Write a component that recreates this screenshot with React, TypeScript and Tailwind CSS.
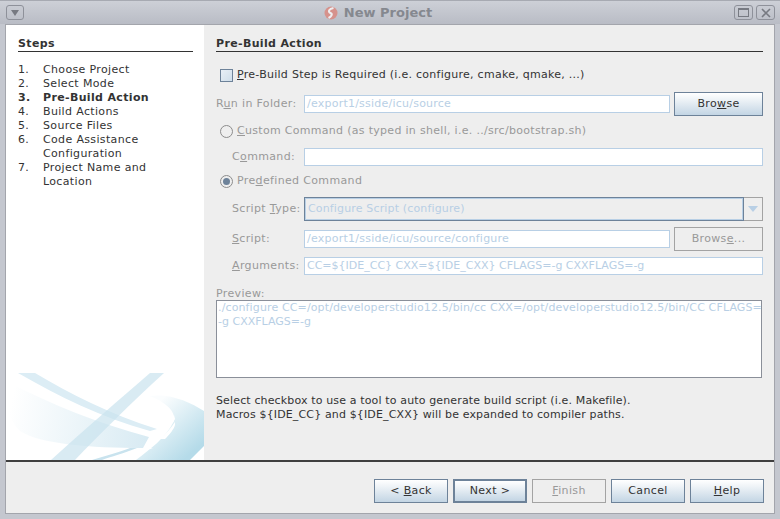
const font = 'font-["DejaVu_Sans",sans-serif]';

const steps = [
  ['1.', 'Choose Project'],
  ['2.', 'Select Mode'],
  ['3.', 'Pre-Build Action'],
  ['4.', 'Build Actions'],
  ['5.', 'Source Files'],
  ['6.', 'Code Assistance Configuration'],
  ['7.', 'Project Name and Location'],
];

const Swoosh = () => (
  <svg width="198" height="88" viewBox="6 373 198 88" className="mt-auto block shrink-0">
    <defs>
      <linearGradient id="sweep" x1="10" y1="410" x2="160" y2="440" gradientUnits="userSpaceOnUse">
        <stop offset="0" stopColor="#ffffff" />
        <stop offset="1" stopColor="#d5e9f2" />
      </linearGradient>
      <linearGradient id="crescent" x1="152" y1="400" x2="196" y2="450" gradientUnits="userSpaceOnUse">
        <stop offset="0.1" stopColor="#fbfdfe" />
        <stop offset="1" stopColor="#b5dbe9" />
      </linearGradient>
    </defs>
    <path d="M8 383 C50 405 100 425 149 438 L143 449 C90 449 40 445 20 432 Q12 425 8 410 Z" fill="url(#sweep)" />
    <path d="M18 374 L35 374 C70 395 110 415 157 430 L150 432 C100 418 60 398 18 374 Z" fill="#dcedf5" />
    <path d="M150 374 L164 374 C130 405 100 435 75 461 L51 461 C85 430 120 400 150 374 Z" fill="#c9e2ee" fillOpacity="0.7" />
    <path d="M150 397 C170 394 190 403 204 412 L204 447 L190 461 L136 461 C150 450 165 440 174 422 C176 412 165 403 150 397 Z" fill="url(#crescent)" />
    <path d="M174 416 C168 426 160 432 148 438 L156 438 C166 432 172 426 175 420 Z" fill="#ffffff" />
    <path d="M175 423 C170 430 166 435 160 440 L165 440 C170 435 174 430 175 426 Z" fill="#ffffff" />
    <path d="M90 461 C105 457 120 453 138 449 L153 449 C140 453 130 457 119 461 Z" fill="#ffffff" />
    <path d="M92 461 C105 457 120 453 130 449 L137 449 C125 454 110 458 102 461 Z" fill="#c9e3ee" />
  </svg>
);

const Btn = ({ children, disabled, focus, className = '' }: { children: React.ReactNode; disabled?: boolean; focus?: boolean; className?: string }) => (
  <div
    className={`flex items-center justify-center h-6 ${
      disabled
        ? 'border border-[#a3a3a3] bg-[#eeeeee] text-[#999999]'
        : focus
        ? 'border-2 border-[#6d8299] bg-[linear-gradient(#ffffff,#eef3f7_30%,#c3d5e4)] text-[#333333]'
        : 'border border-[#6d8299] bg-[linear-gradient(#ffffff,#eef3f7_30%,#c3d5e4)] text-[#333333]'
    } ${className}`}
  >
    <span className="whitespace-pre">{children}</span>
  </div>
);

const Field = ({ value, className = '' }: { value?: string; className?: string }) => (
  <div className={`h-[18px] bg-white border border-[#b8cfe5] px-[2px] leading-[15px] text-[#b8cfe5] whitespace-nowrap overflow-hidden ${className}`}>
    {value}
  </div>
);

const Label = ({ children }: { children: React.ReactNode }) => <span className="text-[#999999] whitespace-nowrap">{children}</span>;

export default function App() {
  return (
    <div className={`w-[780px] h-[519px] bg-[#c4c7cf] flex flex-col overflow-hidden text-[11px] leading-[14px] tracking-[0.35px] ${font}`}>
      {/* title bar */}
      <div className="h-6 shrink-0 flex items-center pl-[6px] pr-[5px] bg-[linear-gradient(#cdd0d7,#b9bcc5)] border-t border-[#a7aab2]">
        <div className="w-[18px] h-[15px] rounded-[3px] border border-[#8e919a] flex items-center justify-center">
          <div className="w-0 h-0 border-x-[4px] border-x-transparent border-t-[6px] border-t-[#777a82]" />
        </div>
        <div className="flex-1 flex items-center justify-center gap-[6px] pr-[2px]">
          <svg width="14" height="14" viewBox="0 0 14 14">
            <circle cx="7" cy="7" r="6.5" fill="#d6928c" />
            <path d="M9.5 2 C5 3 3.5 5.5 6.5 7 C9 8.2 7.5 10.5 4.5 12" fill="none" stroke="#eeeef0" strokeWidth="2" />
          </svg>
          <span className="font-bold text-[13px] text-[#85888f] tracking-[0px]">New Project</span>
        </div>
        <div className="flex gap-[3px]">
          <div className="w-[19px] h-[15px] rounded-[3px] border border-[#8e919a] flex items-center justify-center">
            <div className="w-[11px] h-[9px] border border-[#777a82] border-t-2" />
          </div>
          <div className="w-[19px] h-[15px] rounded-[3px] border border-[#8e919a] flex items-center justify-center text-[#777a82]">
            <svg width="10" height="10" viewBox="0 0 10 10"><path d="M1 1 L9 9 M9 1 L1 9" stroke="currentColor" strokeWidth="1.6" /></svg>
          </div>
        </div>
      </div>

      {/* window frame */}
      <div className="mx-[5px] flex-1 border border-[#a3a5ac] bg-[#eeeeee] mb-[5px] flex flex-col min-h-0">
        <div className="h-[437px] flex border-b-2 border-[#3f3f3f] shrink-0">
          {/* steps */}
          <div className="w-[198px] bg-white flex flex-col text-[#333333] shrink-0">
            <div className="ml-3 w-[175px] mt-[12px] font-bold border-b border-[#333333] pb-[1px] h-[15px] leading-[13px]">Steps</div>
            <div className="ml-3 mt-[11px] w-[175px]">
              {steps.map(([n, s]) => (
                <div key={n} className={`flex ${n === '3.' ? 'font-bold' : ''}`}>
                  <span className="w-[25px] shrink-0">{n}</span>
                  <span>{s}</span>
                </div>
              ))}
            </div>
            <Swoosh />
          </div>

          {/* form */}
          <div className="flex-1 pl-3 pr-[11px] text-[#333333] min-w-0">
            <div className="mt-[12px] font-bold border-b border-[#333333] h-[15px] leading-[13px]">Pre-Build Action</div>

            <div className="mt-4 ml-1 flex items-center h-[14px] tracking-[0.27px]">
              <div className="w-[13px] h-[13px] border border-[#6d8299] bg-[linear-gradient(135deg,#e8eff6,#cfdeea)]" />
              <span className="ml-1"><u>P</u>re-Build Step is Required (i.e. configure, cmake, qmake, ...)</span>
            </div>

            <div className="mt-[10px] flex items-center h-6">
              <div className="w-[88px]"><Label>R<u>u</u>n in Folder:</Label></div>
              <Field value="/export1/sside/icu/source" className="w-[366px] tracking-[0.23px]" />
              <Btn className="w-[89px] ml-1">Bro<u>w</u>se</Btn>
            </div>

            <div className="mt-2 ml-1 flex items-center h-[14px] tracking-[0.3px]">
              <div className="w-[13px] h-[13px] rounded-full border border-[#8c8c8c] bg-[#eeeeee]" />
              <span className="ml-1 text-[#999999]"><u>C</u>ustom Command (as typed in shell, i.e. ../src/bootstrap.sh)</span>
            </div>

            <div className="mt-[10px] flex items-center h-[18px]">
              <div className="w-[88px] pl-4"><Label>C<u>o</u>mmand:</Label></div>
              <Field className="flex-1" />
            </div>

            <div className="mt-2 ml-1 flex items-center h-[14px]">
              <div className="w-[13px] h-[13px] rounded-full border border-[#8c8c8c] bg-[#eeeeee] flex items-center justify-center">
                <div className="w-[7px] h-[7px] rounded-full bg-[#6d8299]" />
              </div>
              <span className="ml-1 text-[#999999]">Pre<u>d</u>efined Command</span>
            </div>

            <div className="mt-[9px] flex items-center h-6">
              <div className="w-[88px] pl-4"><Label>Script <u>T</u>ype:</Label></div>
              <div className="flex-1 flex h-[24px]">
                <div className="flex-1 border border-[#6d8299] shadow-[inset_0_0_0_1px_#b8cfe5] pl-[3px] leading-[21px] text-[#b8cfe5] tracking-[0.15px]">Configure Script (configure)</div>
                <div className="w-[19px] border border-l-0 border-[#a3a3a3] flex items-center justify-center">
                  <div className="w-0 h-0 border-x-[5px] border-x-transparent border-t-[6px] border-t-[#b8cfe5]" />
                </div>
              </div>
            </div>

            <div className="mt-[6px] flex items-center h-6">
              <div className="w-[88px] pl-4"><Label><u>S</u>cript:</Label></div>
              <Field value="/export1/sside/icu/source/configure" className="w-[366px] tracking-[0.24px]" />
              <Btn disabled className="w-[89px] ml-1">Brows<u>e</u>...</Btn>
            </div>

            <div className="mt-[6px] flex items-center h-[18px]">
              <div className="w-[88px] pl-4"><Label><u>A</u>rguments:</Label></div>
              <Field value="CC=${IDE_CC} CXX=${IDE_CXX} CFLAGS=-g CXXFLAGS=-g" className="flex-1 tracking-[0px]" />
            </div>

            <div className="mt-[12px] h-[13px] leading-[13px]"><Label>Preview:</Label></div>
            <div className="h-[78px] bg-white border border-[#8a8f99] px-[1px] text-[#b8cfe5] leading-[14px] w-[546px] tracking-[0.13px] whitespace-nowrap overflow-hidden">
              <div>./configure CC=/opt/developerstudio12.5/bin/cc CXX=/opt/developerstudio12.5/bin/CC CFLAGS=</div>
              <div className="tracking-[0px]">-g CXXFLAGS=-g</div>
            </div>

            <div className="mt-4 tracking-[0.14px]">
              <div className="whitespace-nowrap">Select checkbox to use a tool to auto generate build script (i.e. Makefile).</div>
              <div className="whitespace-nowrap">Macros ${'{'}IDE_CC{'}'} and ${'{'}IDE_CXX{'}'} will be expanded to compiler paths.</div>
            </div>
          </div>
        </div>

        {/* footer buttons */}
        <div className="flex-1 flex justify-end items-start pt-[17px] pr-[10px] gap-[5px]">
          <Btn className="w-[74px]">&lt; <u>B</u>ack</Btn>
          <Btn focus className="w-[74px]">Next &gt;</Btn>
          <Btn disabled className="w-[74px]"><u>F</u>inish</Btn>
          <Btn className="w-[74px]">Cancel</Btn>
          <Btn className="w-[74px]"><u>H</u>elp</Btn>
        </div>
      </div>
    </div>
  );
}
